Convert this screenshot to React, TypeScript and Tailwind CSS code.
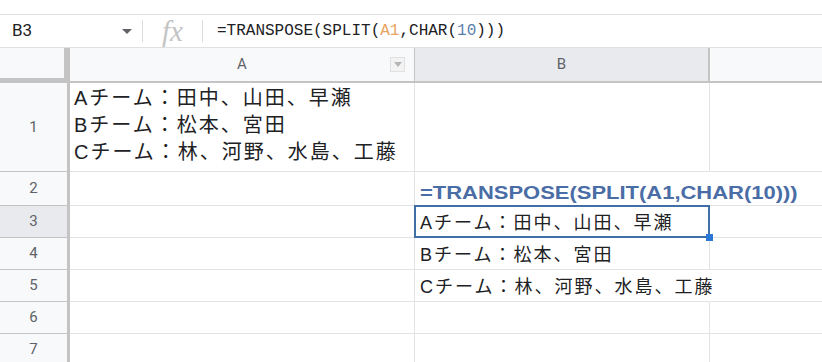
const cellFont = { fontFamily: '"Liberation Sans", "Noto Sans CJK JP", sans-serif' };

const rows = [
  { n: 1, h: 'h-[89px]' },
  { n: 2, h: 'h-[34px]' },
  { n: 3, h: 'h-[32px]' },
  { n: 4, h: 'h-[32px]' },
  { n: 5, h: 'h-[32px]' },
  { n: 6, h: 'h-[32px]' },
  { n: 7, h: 'h-[32px]' },
];

const teams = ['Aチーム：田中、山田、早瀬', 'Bチーム：松本、宮田', 'Cチーム：林、河野、水島、工藤'];

export default function App() {
  return (
    <div className="w-[822px] h-[362px] overflow-hidden bg-white text-[#202124]">
      {/* toolbar remnant */}
      <div className="h-[15px] border-b border-[#e3e3e3] bg-white" />

      {/* formula bar */}
      <div className="flex h-[33px] items-center border-b border-[#e0e0e0]">
        <div className="flex w-[142px] items-center justify-between pl-3 pr-[10px]">
          <span className="text-[17px]" style={{ fontFamily: 'Roboto, sans-serif' }}>B3</span>
          <span className="h-0 w-0 border-x-[5px] border-t-[5px] border-x-transparent border-t-[#5f6368]" />
        </div>
        <div className="h-[22px] w-px bg-[#dadce0]" />
        <div className="flex w-[59px] justify-center">
          <span className="text-[29px] italic leading-none text-[#c4c4c4]" style={{ fontFamily: '"Liberation Serif", serif' }}>
            fx
          </span>
        </div>
        <div className="h-[22px] w-px bg-[#dadce0]" />
        <div className="pl-[14px] text-[16px]" style={{ fontFamily: '"Liberation Mono", monospace' }}>
          =TRANSPOSE(SPLIT(<span className="text-[#e9a25f]">A1</span>,CHAR(<span className="text-[#5a7fad]">10</span>)))
        </div>
      </div>

      {/* column headers */}
      <div className="flex h-[35px]" style={{ fontFamily: 'Roboto, sans-serif' }}>
        <div className="w-[70px] shrink-0 border-r-[6px] border-b-[5px] border-[#c4c4c4] bg-[#f8f9fa]" />
        <div className="relative flex w-[345px] shrink-0 items-center justify-center border-r border-b-2 border-[#c4c4c4] bg-[#f8f9fa] text-[15px] text-[#5f6368]">
          A
          <div className="absolute right-[9px] top-[9px] flex h-[15px] w-[15px] items-center justify-center border border-[#e0e0e0] bg-[#f3f3f3]">
            <span className="h-0 w-0 border-x-[4px] border-t-[5px] border-x-transparent border-t-[#b5b5b5]" />
          </div>
        </div>
        <div className="flex w-[295px] shrink-0 items-center justify-center border-r-2 border-b-2 border-[#c4c4c4] bg-[#e8eaed] text-[15px] text-[#5f6368]">
          B
        </div>
        <div className="flex-1 border-b-2 border-[#c4c4c4] bg-[#f8f9fa]" />
      </div>

      {/* rows */}
      {rows.map(r => (
        <div key={r.n} className={`flex ${r.h}`}>
          <div
            className={`flex w-[70px] shrink-0 items-center justify-center border-r-[3px] border-b border-[#c4c4c4] text-[15px] text-[#5f6368] ${r.n === 3 ? 'bg-[#e8eaed]' : 'bg-[#f8f9fa]'}`}
            style={{ fontFamily: 'Roboto, sans-serif' }}
          >
            {r.n}
          </div>
          <div className="w-[345px] shrink-0 border-r border-b border-[#e2e3e3] pl-[4px] pt-[2px]" style={cellFont}>
            {r.n === 1 &&
              teams.map(t => (
                <div key={t} className="text-[20px] leading-[27px] tracking-[2px] whitespace-nowrap">
                  {t}
                </div>
              ))}
          </div>
          <div
            className={`relative w-[295px] shrink-0 border-b border-[#e2e3e3] ${r.n === 2 || r.n === 5 ? 'border-r border-r-white' : 'border-r'}`}
            style={cellFont}
          >
            {r.n === 2 && (
              <div className="absolute left-[5px] bottom-[2px] origin-left scale-x-[1.22] whitespace-nowrap text-[18px] font-bold leading-[20px] text-[#4a6da6]">
                =TRANSPOSE(SPLIT(A1,CHAR(10)))
              </div>
            )}
            {r.n >= 3 && r.n <= 5 && (
              <div className="relative z-10 flex h-full items-center whitespace-nowrap pl-[5px] pt-[3px] text-[18px] tracking-[2px]">
                {teams[r.n - 3]}
              </div>
            )}
            {r.n === 3 && (
              <>
                <div className="absolute -left-px -top-px -right-px -bottom-px z-20 border-2 border-[#3f6fa5]" />
                <div className="absolute -right-[4px] -bottom-[4px] z-30 h-[7px] w-[7px] bg-[#2a77d6]" />
              </>
            )}
          </div>
          <div className="flex-1 border-b border-[#e2e3e3]" />
        </div>
      ))}
    </div>
  );
}
